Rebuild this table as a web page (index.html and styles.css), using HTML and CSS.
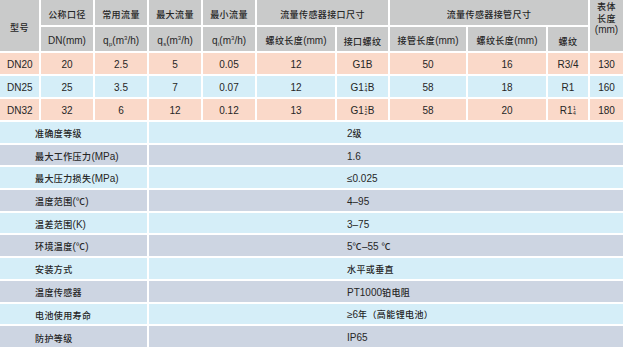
FILE: index.html
```html
<!DOCTYPE html>
<html lang="zh-CN">
<head>
<meta charset="utf-8">
<title>规格参数</title>
<link rel="stylesheet" href="styles.css">
</head>
<body>
<div class="spec">
  <div class="top">
    <div class="c h span2r"><span class="zh">型号</span></div>
    <div class="c h"><span class="zh">公称口径</span></div>
    <div class="c h"><span class="zh">常用流量</span></div>
    <div class="c h"><span class="zh">最大流量</span></div>
    <div class="c h"><span class="zh">最小流量</span></div>
    <div class="c h span2c"><span class="zh">流量传感器接口尺寸</span></div>
    <div class="c h span3c"><span class="zh">流量传感器接管尺寸</span></div>
    <div class="c h span2r stack"><span class="zh">表体</span><span class="zh">长度</span><span>(mm)</span></div>

    <div class="c h r2"><span>DN(mm)</span></div>
    <div class="c h r2"><span>q<span class="sub">p</span>(m<span class="sup">3</span>/h)</span></div>
    <div class="c h r2"><span>q<span class="sub">s</span>(m<span class="sup">3</span>/h)</span></div>
    <div class="c h r2"><span>q<span class="sub">i</span>(m<span class="sup">3</span>/h)</span></div>
    <div class="c h r2"><span><span class="zh">螺纹长度</span>(mm)</span></div>
    <div class="c h r2"><span class="zh">接口螺纹</span></div>
    <div class="c h r2"><span><span class="zh">接管长度</span>(mm)</span></div>
    <div class="c h r2"><span><span class="zh">螺纹长度</span>(mm)</span></div>
    <div class="c h r2"><span class="zh">螺纹</span></div>

    <div class="c pink left"><span>DN20</span></div>
    <div class="c pink"><span>20</span></div>
    <div class="c pink"><span>2.5</span></div>
    <div class="c pink"><span>5</span></div>
    <div class="c pink"><span>0.05</span></div>
    <div class="c pink"><span>12</span></div>
    <div class="c pink"><span>G1B</span></div>
    <div class="c pink"><span>50</span></div>
    <div class="c pink"><span>16</span></div>
    <div class="c pink"><span>R3/4</span></div>
    <div class="c pink"><span>130</span></div>

    <div class="c blue left"><span>DN25</span></div>
    <div class="c blue"><span>25</span></div>
    <div class="c blue"><span>3.5</span></div>
    <div class="c blue"><span>7</span></div>
    <div class="c blue"><span>0.07</span></div>
    <div class="c blue"><span>12</span></div>
    <div class="c blue"><span>G1<span class="frac"><span>1</span><span>4</span></span>B</span></div>
    <div class="c blue"><span>58</span></div>
    <div class="c blue"><span>18</span></div>
    <div class="c blue"><span>R1</span></div>
    <div class="c blue"><span>160</span></div>

    <div class="c pink left"><span>DN32</span></div>
    <div class="c pink"><span>32</span></div>
    <div class="c pink"><span>6</span></div>
    <div class="c pink"><span>12</span></div>
    <div class="c pink"><span>0.12</span></div>
    <div class="c pink"><span>13</span></div>
    <div class="c pink"><span>G1<span class="frac"><span>1</span><span>2</span></span>B</span></div>
    <div class="c pink"><span>58</span></div>
    <div class="c pink"><span>20</span></div>
    <div class="c pink"><span>R1<span class="frac"><span>1</span><span>4</span></span></span></div>
    <div class="c pink"><span>180</span></div>
  </div>

  <div class="bottom">
    <div class="l blue"><span class="zh">准确度等级</span></div>
    <div class="v blue"><span>2<span class="zh">级</span></span></div>
    <div class="l gray"><span><span class="zh">最大工作压力</span>(MPa)</span></div>
    <div class="v gray"><span>1.6</span></div>
    <div class="l blue"><span><span class="zh">最大压力损失</span>(MPa)</span></div>
    <div class="v blue"><span>≤0.025</span></div>
    <div class="l gray"><span><span class="zh">温度范围</span>(<span class="zh">℃</span>)</span></div>
    <div class="v gray"><span>4–95</span></div>
    <div class="l blue"><span><span class="zh">温差范围</span>(K)</span></div>
    <div class="v blue"><span>3–75</span></div>
    <div class="l gray"><span><span class="zh">环境温度</span>(<span class="zh">℃</span>)</span></div>
    <div class="v gray"><span>5<span class="zh">℃</span>–55 <span class="zh">℃</span></span></div>
    <div class="l blue"><span class="zh">安装方式</span></div>
    <div class="v blue"><span class="zh">水平或垂直</span></div>
    <div class="l gray"><span class="zh">温度传感器</span></div>
    <div class="v gray"><span>PT1000<span class="zh">铂电阻</span></span></div>
    <div class="l blue"><span class="zh">电池使用寿命</span></div>
    <div class="v blue"><span>≥6<span class="zh">年（高能锂电池）</span></span></div>
    <div class="l gray"><span class="zh">防护等级</span></div>
    <div class="v gray"><span>IP65</span></div>
  </div>
</div>
</body>
</html>
```
FILE: styles.css
```css
html, body {
  margin: 0;
  padding: 0;
  background: #ffffff;
}

.spec {
  width: 623px;
  font-family: "Liberation Sans", "Noto Sans CJK SC", sans-serif;
  font-size: 10px;
  color: #262626;
  background: #ffffff;
}

.zh {
  font-family: "Noto Sans CJK SC", sans-serif;
  font-size: 9px;
  font-weight: 500;
  letter-spacing: 0.4px;
}

.top {
  display: grid;
  grid-template-columns: 39px 52px 52px 52px 52px 78px 51px 76px 78px 40px 33px;
  grid-template-rows: 25px 24px 21px 21px 21px;
  gap: 2px;
}

.c {
  display: flex;
  align-items: center;
  justify-content: center;
  padding-top: 3px;
  box-sizing: border-box;
  white-space: nowrap;
  line-height: 1;
}

.h { background: #c9caca; }
.pink { background: #fad9c9; }
.blue { background: #d5eef8; }
.gray { background: #cdd5e2; }

.r2 { padding-top: 4px; }

.span2r { grid-row: span 2; }
.span2c { grid-column: span 2; }
.span3c { grid-column: span 3; }

.stack {
  flex-direction: column;
  justify-content: flex-start;
  padding-top: 1px;
  line-height: 11.7px;
}

.left {
  justify-content: flex-start;
  padding-left: 7px;
}

.sub {
  font-size: 6px;
  line-height: 1;
  vertical-align: -2px;
  margin-left: 0.5px;
}

.sup {
  font-size: 6px;
  line-height: 1;
  vertical-align: 4px;
}

.frac {
  display: inline-flex;
  flex-direction: column;
  align-items: center;
  font-size: 5px;
  line-height: 4.5px;
  margin: 0 0.5px;
  vertical-align: 4px;
}

.bottom {
  display: grid;
  grid-template-columns: 147px 474px;
  grid-auto-rows: 20.7px;
  gap: 2px;
  margin-top: 2px;
}

.l, .v {
  display: flex;
  align-items: center;
  padding-top: 3px;
  box-sizing: border-box;
  white-space: nowrap;
  line-height: 1;
}

.l { padding-left: 35px; }
.v { padding-left: 198px; }
```
